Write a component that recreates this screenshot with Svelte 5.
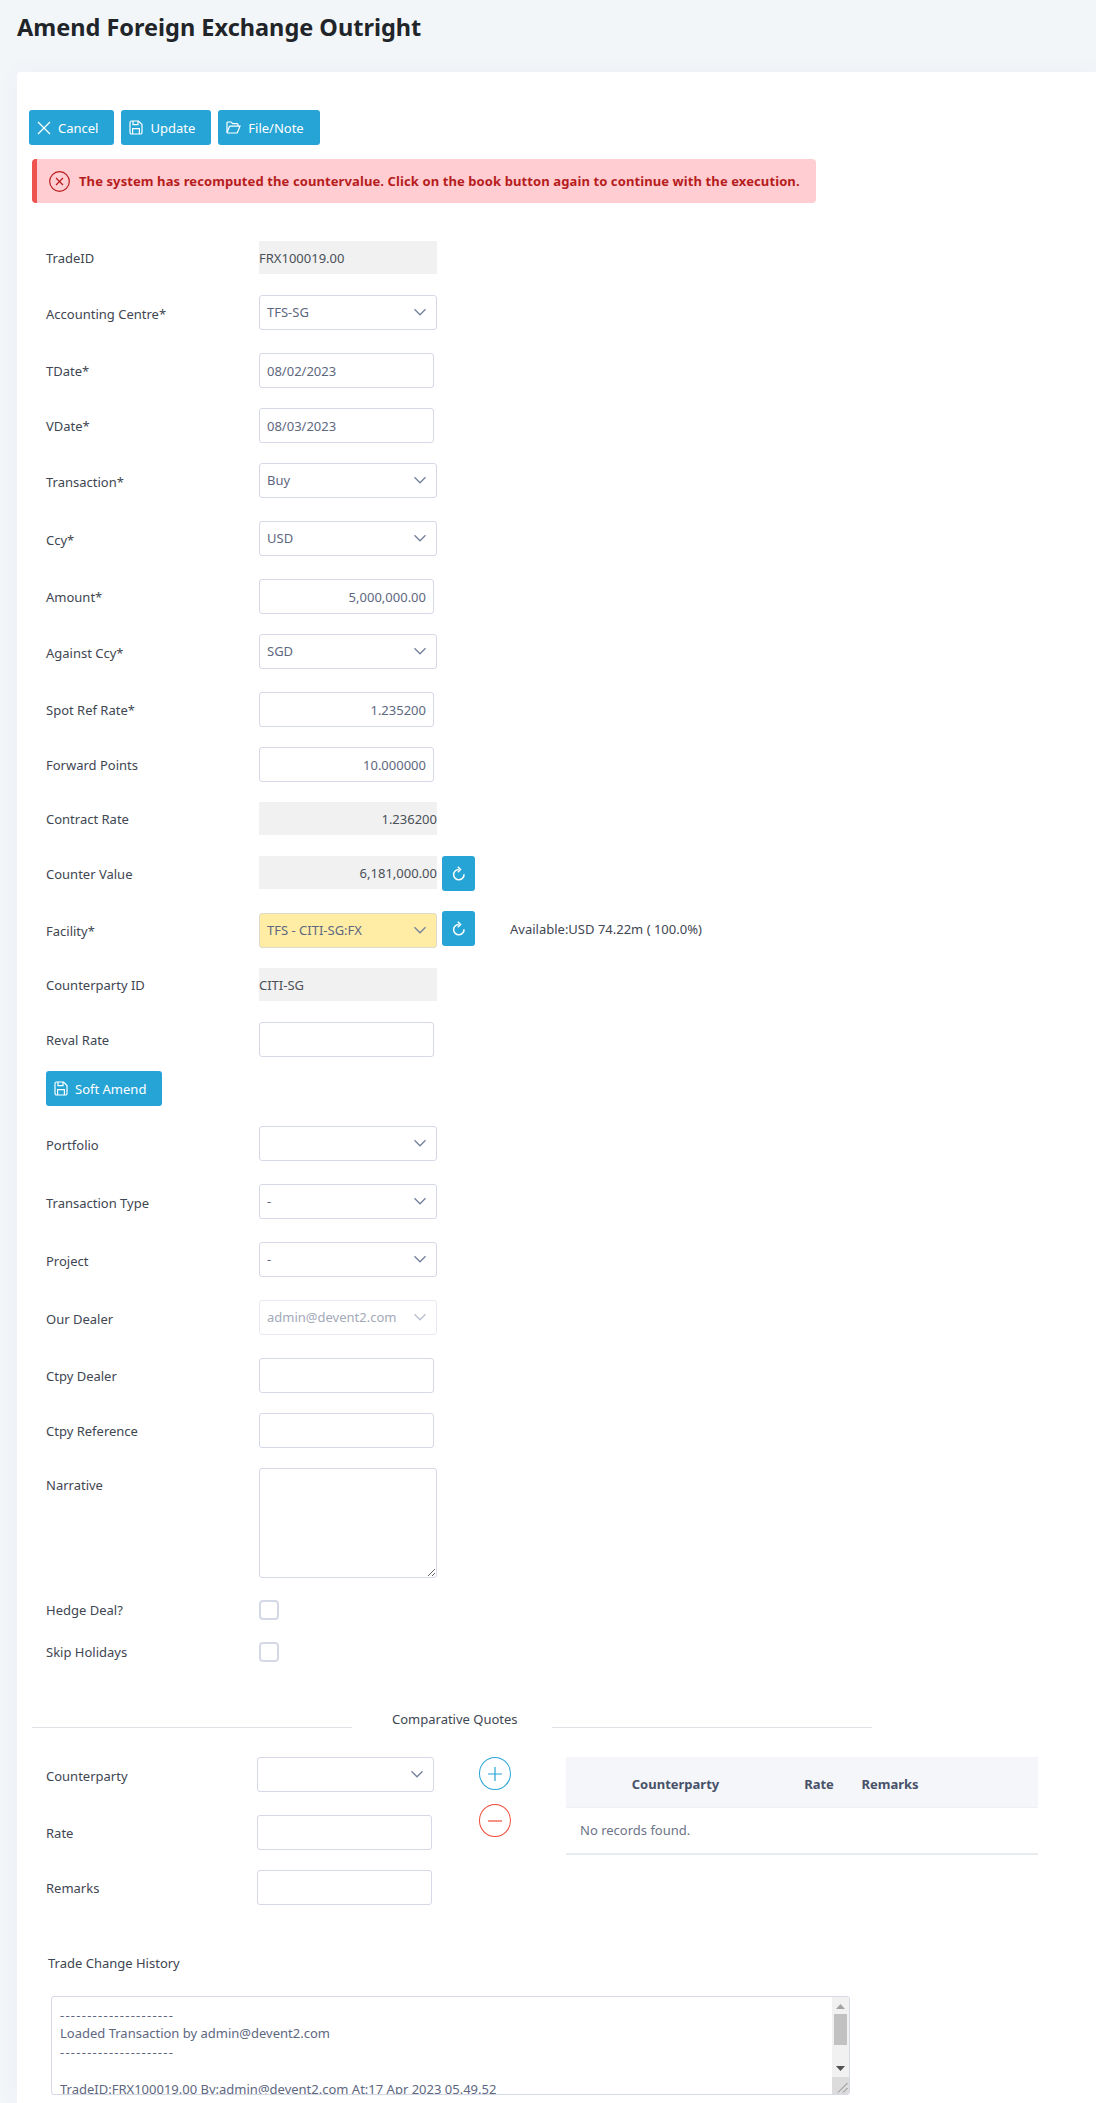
<script>
  const fields = [
    { label: 'TradeID', kind: 'ro', value: 'FRX100019.00' },
    { label: 'Accounting Centre*', kind: 'sel', value: 'TFS-SG' },
    { label: 'TDate*', kind: 'input', value: '08/02/2023' },
    { label: 'VDate*', kind: 'input', value: '08/03/2023' },
    { label: 'Transaction*', kind: 'sel', value: 'Buy' },
    { label: 'Ccy*', kind: 'sel', value: 'USD' },
    { label: 'Amount*', kind: 'input', value: '5,000,000.00', right: true },
    { label: 'Against Ccy*', kind: 'sel', value: 'SGD' },
    { label: 'Spot Ref Rate*', kind: 'input', value: '1.235200', right: true },
    { label: 'Forward Points', kind: 'input', value: '10.000000', right: true },
    { label: 'Contract Rate', kind: 'ro', value: '1.236200', right: true },
    { label: 'Counter Value', kind: 'ro', value: '6,181,000.00', right: true, refresh: true },
    { label: 'Facility*', kind: 'sel', value: 'TFS - CITI-SG:FX', refresh: true, facility: true },
    { label: 'Counterparty ID', kind: 'ro', value: 'CITI-SG' },
    { label: 'Reval Rate', kind: 'input', value: '', last: true },
  ];

  const fields2 = [
    { label: 'Portfolio', kind: 'sel', value: '' },
    { label: 'Transaction Type', kind: 'sel', value: '-' },
    { label: 'Project', kind: 'sel', value: '-' },
    { label: 'Our Dealer', kind: 'sel', value: 'admin@devent2.com', disabled: true },
    { label: 'Ctpy Dealer', kind: 'input', value: '' },
    { label: 'Ctpy Reference', kind: 'input', value: '' },
  ];

  const history = [
    '---------------------',
    'Loaded Transaction by admin@devent2.com',
    '---------------------',
    '',
    'TradeID:FRX100019.00 By:admin@devent2.com At:17 Apr 2023 05.49.52',
  ];
</script>

{#snippet chevron()}
  <svg class="chev" width="14" height="14" viewBox="0 0 14 14" fill="none">
    <path d="M1.5 4.2L7 9.8L12.5 4.2" stroke="currentColor" stroke-width="1.3"/>
  </svg>
{/snippet}

{#snippet saveIcon()}
  <svg width="14" height="15" viewBox="0 0 14 15" fill="none" stroke="currentColor" stroke-width="1.2">
    <path d="M2.5 1h7l3.5 3.5V12.5a1.5 1.5 0 0 1-1.5 1.5h-9A1.5 1.5 0 0 1 1 12.5v-10A1.5 1.5 0 0 1 2.5 1z"/>
    <path d="M4 1v3.6h5V1M3.6 14V8.6h6.8V14"/>
  </svg>
{/snippet}

{#snippet refreshIcon()}
  <svg width="14" height="16" viewBox="0 0 14 16" fill="none" stroke="currentColor" stroke-width="1.5">
    <path d="M12 8.2A5.2 5.2 0 1 1 6.8 3.4"/>
    <path d="M5.8 0.8L8.6 3.5L5.8 6.2" stroke-width="1.4"/>
  </svg>
{/snippet}

{#snippet field(f)}
  <div class="row {f.kind}" class:last={f.last} class:tall={f.refresh && f.kind === 'ro'} class:fac={f.facility}>
    <span class="label">{f.label}</span>
    {#if f.kind === 'ro'}
      <div class="ro-box" class:right={f.right}>{f.value}</div>
    {:else if f.kind === 'sel'}
      <div class="select" class:yellow={f.facility} class:disabled={f.disabled}>
        <span>{f.value}</span>
        {@render chevron()}
      </div>
    {:else}
      <input class="text" class:right={f.right} type="text" value={f.value} />
    {/if}
    {#if f.refresh}
      <button class="btn icon-only" class:up={f.facility} aria-label="Refresh">{@render refreshIcon()}</button>
    {/if}
    {#if f.facility}
      <span class="avail">Available:USD 74.22m ( 100.0%)</span>
    {/if}
  </div>
{/snippet}

<div class="page">
  <header class="title-bar">
    <h1>Amend Foreign Exchange Outright</h1>
  </header>

  <main class="card">
    <div class="toolbar">
      <button class="btn">
        <svg width="14" height="14" viewBox="0 0 14 14" fill="none" stroke="currentColor" stroke-width="1.3">
          <path d="M1 1L13 13M13 1L1 13"/>
        </svg>
        Cancel
      </button>
      <button class="btn">{@render saveIcon()} Update</button>
      <button class="btn">
        <svg width="15" height="13" viewBox="0 0 15 13" fill="none" stroke="currentColor" stroke-width="1.2">
          <path d="M1 11V2a1 1 0 0 1 1-1h3.2l1.4 1.6H11a1 1 0 0 1 1 1V5.2"/>
          <path d="M1 11.6L3.4 5.8a1 1 0 0 1 .9-.6H14l-2.6 6.2a1 1 0 0 1-.9.6H1.6z"/>
        </svg>
        File/Note
      </button>
    </div>

    <div class="alert">
      <svg width="21" height="21" viewBox="0 0 21 21" fill="none" stroke="currentColor" stroke-width="1.2">
        <circle cx="10.5" cy="10.5" r="9.8"/>
        <path d="M7 7L14 14M14 7L7 14"/>
      </svg>
      <span>The system has recomputed the countervalue. Click on the book button again to continue with the execution.</span>
    </div>

    <form class="form">
      {#each fields as f}
        {@render field(f)}
      {/each}

      <button type="button" class="btn soft">{@render saveIcon()} Soft Amend</button>

      {#each fields2 as f}
        {@render field(f)}
      {/each}

      <div class="row narrative">
        <span class="label">Narrative</span>
        <textarea class="note"></textarea>
      </div>
      <div class="row check">
        <span class="label">Hedge Deal?</span>
        <span class="box"></span>
      </div>
      <div class="row check">
        <span class="label">Skip Holidays</span>
        <span class="box"></span>
      </div>
    </form>

    <div class="divider">
      <i></i>
      <span>Comparative Quotes</span>
      <i></i>
    </div>

    <section class="quotes">
      <div class="quote-form">
        <div class="row sel">
          <span class="label">Counterparty</span>
          <div class="select">
            <span></span>
            {@render chevron()}
          </div>
        </div>
        <div class="row input">
          <span class="label">Rate</span>
          <input class="text" type="text" />
        </div>
        <div class="row input">
          <span class="label">Remarks</span>
          <input class="text" type="text" />
        </div>
      </div>

      <div class="quote-actions">
        <button class="round add" aria-label="Add">
          <svg width="16" height="16" viewBox="0 0 16 16" stroke="currentColor" stroke-width="1.2">
            <path d="M8 1V15M1 8H15"/>
          </svg>
        </button>
        <button class="round del" aria-label="Remove">
          <svg width="16" height="16" viewBox="0 0 16 16" stroke="currentColor" stroke-width="1.2">
            <path d="M1 8H15"/>
          </svg>
        </button>
      </div>

      <table class="quote-table">
        <thead>
          <tr>
            <th class="c1">Counterparty</th>
            <th class="c2">Rate</th>
            <th class="c3">Remarks</th>
            <th></th>
          </tr>
        </thead>
        <tbody>
          <tr><td colspan="4">No records found.</td></tr>
        </tbody>
      </table>
    </section>

    <div class="history-label">Trade Change History</div>
    <div class="history">
      <div class="history-text">
        {#each history as line}
          <div class="line" class:dashes={line.startsWith('---')}>{line}</div>
        {/each}
      </div>
      <div class="scrollbar">
        <svg class="arr-up" width="9" height="5" viewBox="0 0 9 5"><path d="M4.5 0L9 5H0z" fill="#a3a3a3"/></svg>
        <div class="thumb"></div>
        <svg class="arr-down" width="9" height="5" viewBox="0 0 9 5"><path d="M0 0H9L4.5 5z" fill="#505050"/></svg>
        <div class="corner">
          <svg width="17" height="17" viewBox="0 0 17 17" stroke="#6f6f6f" stroke-width="0.8">
            <path d="M6 15.5L15.5 6M11 15.5L15.5 11"/>
          </svg>
        </div>
      </div>
    </div>
  </main>
</div>

<style>
  :global(body) {
    margin: 0;
    background: #f3f6f9;
    font-family: "Noto Sans", "Open Sans", sans-serif;
    font-size: 13px;
    color: #495057;
  }
  * {
    box-sizing: border-box;
  }
  .page {
    height: 2103px;
    overflow: hidden;
  }
  .title-bar {
    height: 72px;
    padding: 10px 17px 0;
  }
  h1 {
    margin: 0;
    font-size: 23.5px;
    line-height: 34px;
    font-weight: 700;
    color: #212529;
  }
  .card {
    margin-left: 17px;
    height: 2031px;
    padding: 38px 0 0 12px;
    background: #fff;
    border-radius: 4px 0 0 0;
    box-shadow: 0 0 24px rgba(40, 60, 90, 0.04);
  }
  .toolbar {
    display: flex;
    gap: 7px;
  }
  .btn {
    display: inline-flex;
    align-items: center;
    gap: 7px;
    height: 35px;
    padding: 0 16px 0 8px;
    border: 0;
    border-radius: 3px;
    background: #26a4d6;
    color: #fff;
    font: inherit;
  }
  .btn svg {
    flex: none;
  }
  .alert {
    display: flex;
    align-items: center;
    gap: 9px;
    width: 784px;
    height: 44px;
    margin: 14px 0 38px 3px;
    padding-left: 12px;
    background: #ffcdd2;
    border-left: 5px solid #ef5350;
    border-radius: 4px;
    color: #b71c1c;
    font-weight: 700;
    letter-spacing: 0.1px;
  }
  .form {
    padding-left: 17px;
  }
  .row {
    display: flex;
    align-items: center;
  }
  .row.ro {
    margin-bottom: 21px;
  }
  .row.input {
    margin-bottom: 20px;
  }
  .row.sel {
    margin-bottom: 23px;
  }
  .row.last {
    margin-bottom: 14px;
  }
  .row.tall {
    margin-bottom: 20px;
  }
  .row.fac {
    height: 37px;
    align-items: flex-end;
    margin-bottom: 20px;
  }
  .label {
    flex: none;
    width: 213px;
    color: #404652;
  }
  .row.sel .label {
    padding-top: 3px;
  }
  .row.fac .label {
    padding: 0 0 8px;
  }
  .ro-box {
    display: flex;
    align-items: center;
    flex: none;
    width: 178px;
    height: 33px;
    background: #f1f1f1;
  }
  .ro-box.right {
    justify-content: flex-end;
  }
  input.text {
    flex: none;
    width: 175px;
    height: 35px;
    padding: 0 7px;
    border: 1px solid #d5d8e6;
    border-radius: 3px;
    background: #fff;
    font: inherit;
    color: #5e6780;
    outline: none;
  }
  input.text.right {
    text-align: right;
  }
  .select {
    display: flex;
    align-items: center;
    justify-content: space-between;
    flex: none;
    width: 178px;
    height: 35px;
    padding: 0 9px 2px 7px;
    border: 1px solid #d5d8e6;
    border-radius: 3px;
    background: #fff;
    color: #5e6780;
  }
  .chev {
    flex: none;
    color: #75809c;
  }
  .select.yellow {
    background: #ffeda6;
    border-color: #dedcc8;
  }
  .select.disabled {
    border-color: #e8eaf2;
    color: #a3a9b8;
  }
  .select.disabled .chev {
    color: #b9bfce;
  }
  .icon-only {
    flex: none;
    width: 33px;
    margin-left: 5px;
    padding: 0;
    justify-content: center;
  }
  .icon-only.up {
    align-self: flex-start;
  }
  .row.tall .ro-box {
    align-self: flex-start;
  }
  .avail {
    align-self: flex-start;
    margin: 9px 0 0 35px;
    color: #404652;
    white-space: nowrap;
  }
  .soft {
    display: flex;
    margin-bottom: 20px;
  }
  .narrative {
    align-items: flex-start;
    margin-bottom: 22px;
  }
  .narrative .label {
    padding-top: 8px;
  }
  textarea.note {
    display: block;
    width: 178px;
    height: 110px;
    border: 1px solid #d5d8e6;
    border-radius: 3px;
    outline: none;
  }
  .check {
    height: 20px;
    margin-bottom: 22px;
  }
  .box {
    width: 20px;
    height: 20px;
    border: 2px solid #d5d8e6;
    border-radius: 4px;
  }
  .divider {
    display: flex;
    align-items: flex-end;
    margin: 51px 0 0 3px;
    width: 840px;
    height: 15px;
  }
  .divider i {
    width: 320px;
    height: 1px;
    background: #dfe1e6;
  }
  .divider span {
    width: 200px;
    padding-left: 40px;
    line-height: 18px;
    color: #404652;
  }
  .quotes {
    display: flex;
    align-items: flex-start;
    margin-top: 29px;
    padding-left: 17px;
  }
  .quote-form {
    flex: none;
    width: 433px;
  }
  .quote-form .label {
    width: 211px;
  }
  .quote-form .select {
    width: 177px;
  }
  .quote-actions {
    flex: none;
    display: flex;
    flex-direction: column;
    gap: 14px;
    width: 87px;
  }
  .round {
    display: flex;
    align-items: center;
    justify-content: center;
    width: 32px;
    height: 33px;
    padding: 0;
    border: 1px solid;
    border-radius: 50%;
    background: #fff;
  }
  .add {
    color: #26a4d6;
  }
  .del {
    color: #ef4a36;
  }
  .quote-table {
    width: 472px;
    border-collapse: collapse;
    table-layout: fixed;
    flex: none;
  }
  .quote-table th {
    height: 50px;
    padding: 5px 0 0;
    background: #f5f6f9;
    border-bottom: 1px solid #eef0f3;
    color: #475169;
    font-weight: 700;
    text-align: center;
  }
  .c1 {
    width: 219px;
  }
  .c2 {
    width: 68px;
  }
  .c3 {
    width: 74px;
  }
  .quote-table td {
    height: 47px;
    padding: 0 14px;
    border-bottom: 2px solid #e9ecef;
    color: #6c7488;
  }
  .history-label {
    margin: 29px 0 0 19px;
    line-height: 18px;
    color: #404652;
  }
  .history {
    position: relative;
    width: 799px;
    height: 99px;
    margin: 24px 0 0 22px;
    border: 1px solid #d5d8e6;
    border-radius: 3px;
    overflow: hidden;
  }
  .history-text {
    padding: 9px 8px;
    color: #5e6780;
    white-space: pre;
  }
  .line {
    height: 18.4px;
    line-height: 18.4px;
  }
  .dashes {
    letter-spacing: 1.25px;
  }
  .scrollbar {
    position: absolute;
    top: 0;
    right: 0;
    bottom: 0;
    width: 17px;
    background: #f1f1f1;
  }
  .arr-up {
    position: absolute;
    top: 7px;
    left: 4px;
  }
  .arr-down {
    position: absolute;
    top: 69px;
    left: 4px;
  }
  .thumb {
    position: absolute;
    top: 17px;
    left: 2px;
    width: 13px;
    height: 31px;
    background: #c1c1c1;
  }
  .corner {
    position: absolute;
    right: 0;
    bottom: 0;
    width: 17px;
    height: 17px;
    background: #dcdcdc;
  }
  .corner svg {
    display: block;
  }
</style>
